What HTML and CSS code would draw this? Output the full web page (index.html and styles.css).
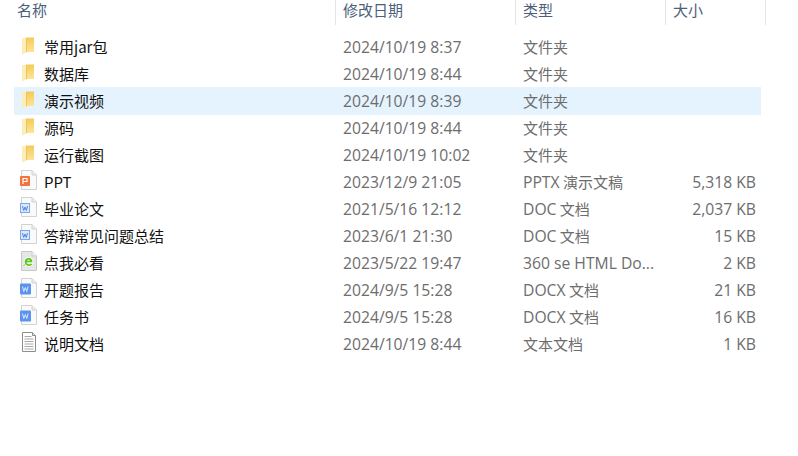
FILE: index.html
```html
<!DOCTYPE html>
<html lang="zh-CN">
<head>
<meta charset="utf-8">
<title>文件列表</title>
<link rel="stylesheet" href="styles.css">
</head>
<body>
<svg class="defs" width="0" height="0" aria-hidden="true">
  <defs>
    <linearGradient id="fg" x1="0" y1="0" x2="0" y2="1"><stop offset="0" stop-color="#f3cb58"/><stop offset="1" stop-color="#fde497"/></linearGradient>
    <symbol id="folder" viewBox="0 0 18 20">
      <path d="M7 2.500h7V17H7z" fill="url(#fg)"/>
      <path d="M2 3.200l5-.7V17l-4 2.500-1-.5z" fill="#fdeeb8"/>
      <path d="M7 2.500V17l-1 .6V2.700z" fill="#eec463"/>
    </symbol>
    <symbol id="page" viewBox="0 0 18 20">
      <path d="M1.500 .5h10.500l4.500 4.500v14.500h-15z" fill="#fafafa" stroke="#d2d2d2"/>
      <path d="M12 .5v4.500h4.500" fill="#ececec" stroke="#d2d2d2"/>
    </symbol>
  </defs>
</svg>
<main class="explorer">
  <div class="head">
    <div class="hcell hname">名称</div>
    <div class="hcell hdate">修改日期</div>
    <div class="hcell htype">类型</div>
    <div class="hcell hsize">大小</div>
  </div>
  <div class="list">
    <div class="row"><svg class="ico"><use href="#folder"/></svg><span class="name">常用jar包</span><span class="date">2024/10/19 8:37</span><span class="type">文件夹</span><span class="size"></span></div>
    <div class="row"><svg class="ico"><use href="#folder"/></svg><span class="name">数据库</span><span class="date">2024/10/19 8:44</span><span class="type">文件夹</span><span class="size"></span></div>
    <div class="row selected"><svg class="ico"><use href="#folder"/></svg><span class="name">演示视频</span><span class="date">2024/10/19 8:39</span><span class="type">文件夹</span><span class="size"></span></div>
    <div class="row"><svg class="ico"><use href="#folder"/></svg><span class="name">源码</span><span class="date">2024/10/19 8:44</span><span class="type">文件夹</span><span class="size"></span></div>
    <div class="row"><svg class="ico"><use href="#folder"/></svg><span class="name">运行截图</span><span class="date">2024/10/19 10:02</span><span class="type">文件夹</span><span class="size"></span></div>
    <div class="row"><svg class="ico" viewBox="0 0 18 20"><use href="#page" width="18" height="20"/><rect x="0" y="6" width="10" height="10" rx="1" fill="#f4733d"/><path d="M3 14V8.500h4v3H3" fill="none" stroke="#fff" stroke-width="1.200"/></svg><span class="name">PPT</span><span class="date">2023/12/9 21:05</span><span class="type"><span class="lat">PPTX</span> 演示文稿</span><span class="size">5,318 KB</span></div>
    <div class="row"><svg class="ico" viewBox="0 0 18 20"><use href="#page" width="18" height="20"/><rect x=".5" y="6.500" width="9" height="9" fill="#dbe8fb" stroke="#7ba7ec"/><path d="M2.500 9l1.200 4.500L5 10l1.300 3.500L7.500 9" fill="none" stroke="#4d86e2"/></svg><span class="name">毕业论文</span><span class="date">2021/5/16 12:12</span><span class="type"><span class="lat">DOC</span> 文档</span><span class="size">2,037 KB</span></div>
    <div class="row"><svg class="ico" viewBox="0 0 18 20"><use href="#page" width="18" height="20"/><rect x=".5" y="6.500" width="9" height="9" fill="#dbe8fb" stroke="#7ba7ec"/><path d="M2.500 9l1.200 4.500L5 10l1.300 3.500L7.500 9" fill="none" stroke="#4d86e2"/></svg><span class="name">答辩常见问题总结</span><span class="date">2023/6/1 21:30</span><span class="type"><span class="lat">DOC</span> 文档</span><span class="size">15 KB</span></div>
    <div class="row"><svg class="ico" viewBox="0 0 18 20"><path d="M1.500 .5h10.500l4.500 4.500v14.500h-15z" fill="#e6e6e6" stroke="#c8c8c8"/><path d="M12 .5v4.500h4.500" fill="#f4f4f4" stroke="#c8c8c8"/><circle cx="8.500" cy="11" r="5" fill="#f4faeb"/><path d="M5 10.500h6.500c-.3-3.500-5-3.500-5.800-.5-.8 3.500 3.500 5.500 6 3" fill="none" stroke="#5cc41c" stroke-width="1.700"/><path d="M3.500 15c1-1 1.500-1.500 2-2" stroke="#8bd34a" fill="none"/></svg><span class="name">点我必看</span><span class="date">2023/5/22 19:47</span><span class="type"><span class="lat">360 se HTML Do...</span></span><span class="size">2 KB</span></div>
    <div class="row"><svg class="ico" viewBox="0 0 18 20"><use href="#page" width="18" height="20"/><rect x="0" y="5.500" width="11" height="11" rx="1" fill="#5b93ee"/><path d="M2.500 8.500l1.300 5 1.500-4 1.500 4 1.300-5" fill="none" stroke="#dce9fc"/></svg><span class="name">开题报告</span><span class="date">2024/9/5 15:28</span><span class="type"><span class="lat">DOCX</span> 文档</span><span class="size">21 KB</span></div>
    <div class="row"><svg class="ico" viewBox="0 0 18 20"><use href="#page" width="18" height="20"/><rect x="0" y="5.500" width="11" height="11" rx="1" fill="#5b93ee"/><path d="M2.500 8.500l1.300 5 1.500-4 1.500 4 1.300-5" fill="none" stroke="#dce9fc"/></svg><span class="name">任务书</span><span class="date">2024/9/5 15:28</span><span class="type"><span class="lat">DOCX</span> 文档</span><span class="size">16 KB</span></div>
    <div class="row"><svg class="ico" viewBox="0 0 18 20"><path d="M2.500 .5h10l3 3v16h-13z" fill="#fff" stroke="#8d8d8d"/><path d="M12.500 .5v3h3" fill="#e4e4e4" stroke="#8d8d8d"/><path d="M4.500 4.500h7M4.500 7h9M4.500 9.500h9M4.500 12h9M4.500 14.500h9M4.500 17h9" stroke="#a8a8a8" fill="none"/></svg><span class="name">说明文档</span><span class="date">2024/10/19 8:44</span><span class="type">文本文档</span><span class="size">1 KB</span></div>
  </div>
</main>
</body>
</html>
```
FILE: styles.css
```css
html, body {
  margin: 0;
  padding: 0;
  background: #fff;
}
body {
  width: 798px;
  height: 456px;
  overflow: hidden;
  font-family: "Noto Sans CJK SC", "Open Sans", sans-serif;
  font-size: 15px;
}
.defs {
  display: block;
  height: 0;
}
.head {
  display: grid;
  grid-template-columns: 336px 180px 150px 100px;
  width: 766px;
  height: 25px;
  color: #4c607a;
  line-height: 19px;
}
.hcell {
  padding-left: 7px;
  border-right: 1px solid #e5e5e5;
  box-sizing: border-box;
}
.hname {
  padding-left: 17px;
}
.list {
  margin: 8px 0 0 14px;
  width: 747px;
}
.row {
  display: grid;
  grid-template-columns: 18px 305px 180px 150px 1fr;
  grid-template-rows: 27px;
  align-items: center;
  height: 27px;
  padding: 0 5px 0 6px;
  box-sizing: border-box;
  line-height: 27px;
  color: #6d6d6d;
}
.row.selected {
  background: #e5f3ff;
  box-shadow: 0 1px 0 #e5f3ff;
}
.ico {
  width: 18px;
  height: 20px;
  margin-top: -3px;
  overflow: visible;
}
.name {
  padding-left: 6px;
  color: #111;
}
.date,
.lat,
.size {
  font-family: "Open Sans", "Noto Sans CJK SC", sans-serif;
  font-size: 15.7px;
}
.date,
.size {
  padding-top: 2px;
}
.lat {
  line-height: 1;
}
.size {
  text-align: right;
}
```
